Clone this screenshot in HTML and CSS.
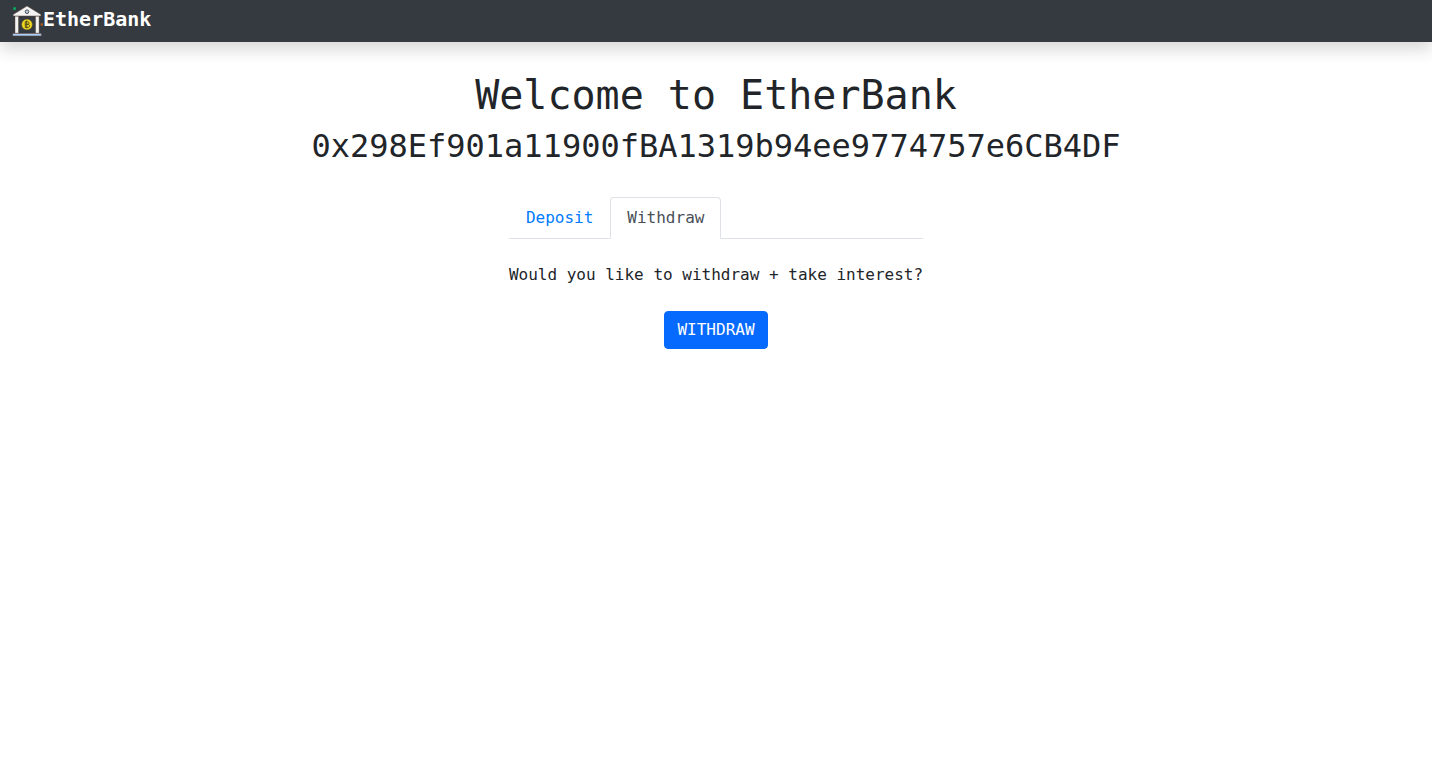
FILE: index.html
```html
<!DOCTYPE html>
<html lang="en">
<head>
<meta charset="utf-8">
<title>EtherBank</title>
<link rel="stylesheet" href="styles.css">
</head>
<body>
<nav class="navbar">
  <a class="brand" href="#">
    <svg class="brand-logo" viewBox="0 0 31 32" aria-hidden="true">
      <path d="M1.200 11V9.600L15 1 28.900 9.600V11z" fill="#f4f3f4" stroke="#5e463e" stroke-width="0.500"/>
      <circle cx="15" cy="6.700" r="1.800" fill="#b9cfe2" stroke="#4b4f58" stroke-width="1"/>
      <path d="M3 11.300h3.500v16.900H3zM23.600 11.300h3.500v16.900h-3.500z" fill="#f4f3f4" stroke="#5e3e36" stroke-width="0.400"/>
      <path d="M0.800 28.500h28.500v2.400H0.800z" fill="#a9d0f5" stroke="#74443a" stroke-width="0.400"/>
      <circle cx="15" cy="19.500" r="5.400" fill="#f0d820" stroke="#4b4330" stroke-width="0.500"/>
      <path d="M13.300 16.700h2.200c2 0 2 2.700 0 2.700h-2.200h2.700c2.100 0 2.100 3 0 3h-2.700zM14.700 15.500v8" fill="none" stroke="#5b501b" stroke-width="1"/>
      <path d="M1.300 2.300h2.500v2.500H1.300z" fill="#00b865"/>
      <path d="M28.600 18.300h2.300v2.300h-2.300z" fill="#b85b16"/>
    </svg>
    <b>EtherBank</b>
  </a>
</nav>
<main class="content">
  <h1 class="title">Welcome to EtherBank</h1>
  <h2 class="account">0x298Ef901a11900fBA1319b94ee9774757e6CB4DF</h2>
  <div class="panel">
    <div class="tabs" role="tablist">
      <a class="tab" role="tab" href="#deposit" aria-selected="false">Deposit</a>
      <a class="tab tab-active" role="tab" href="#withdraw" aria-selected="true">Withdraw</a>
    </div>
    <div class="pane" id="withdraw" role="tabpanel">
      <p class="question">Would you like to withdraw + take interest?</p>
      <button class="button" type="submit">WITHDRAW</button>
    </div>
  </div>
</main>
</body>
</html>
```
FILE: styles.css
```css
* { box-sizing: border-box; }

body {
  margin: 0;
  background: #fff;
  color: #212529;
  font: 16px/24px "DejaVu Sans Mono", "Liberation Mono", monospace;
}

.navbar {
  display: flex;
  height: 42px;
  padding: 4px 12px;
  background: #343a40;
  box-shadow: 0 8px 16px rgba(0, 0, 0, 0.15);
}

.brand {
  display: flex;
  color: #fff;
  font-size: 20px;
  line-height: 30px;
  text-decoration: none;
}

.brand-logo {
  width: 31px;
  height: 32px;
  margin-top: 1px;
}

.content {
  display: flex;
  flex-direction: column;
  align-items: center;
  padding: 29px 16px;
  text-align: center;
}

.title, .account {
  max-width: 100%;
  margin: 0 0 8px;
  font-weight: 400;
  overflow-wrap: anywhere;
}

.title { font-size: 40px; line-height: 48px; }

.account { font-size: 32px; line-height: 38px; }

.panel { margin-top: 24px; }

.tabs {
  display: flex;
  border-bottom: 1px solid #dee2e6;
}

.tab {
  margin-bottom: -1px;
  padding: 8px 16px;
  border: 1px solid transparent;
  border-radius: 4px 4px 0 0;
  color: #007bff;
  text-decoration: none;
}

.tab-active {
  border-color: #dee2e6 #dee2e6 #fff;
  background: #fff;
  color: #495057;
}

.pane { padding-top: 24px; }

.question { margin: 0 0 24px; }

.button {
  padding: 6px 12px;
  border: 1px solid #066aff;
  border-radius: 4px;
  background: #066aff;
  color: #fff;
  font: inherit;
  cursor: pointer;
}
```
